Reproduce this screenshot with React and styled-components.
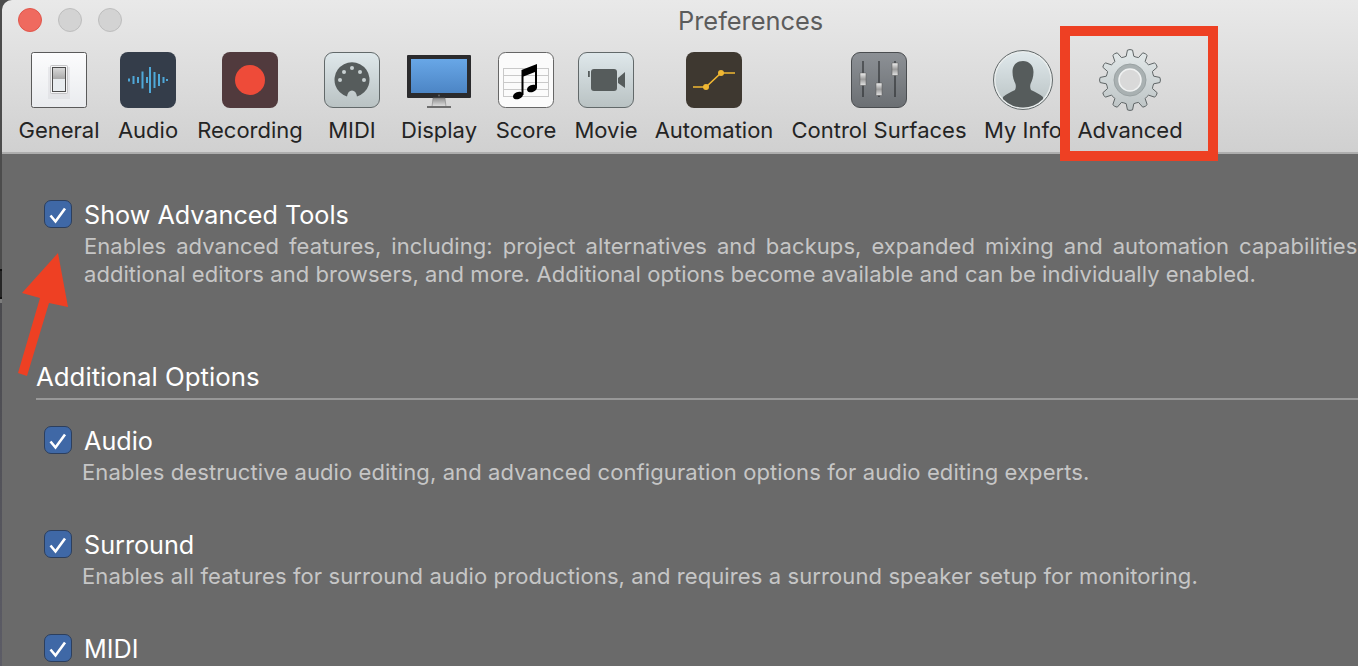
import React from "react";
import styled, { createGlobalStyle } from "styled-components";

const FONT = `Inter, "Noto Sans", "Liberation Sans", sans-serif`;

const GlobalStyle = createGlobalStyle`
    html, body {
        margin: 0;
        padding: 0;
        height: 100%;
        overflow: hidden;
        background: linear-gradient(
            #4c4c4c 0,
            #4c4c4c 269px,
            #111 269px,
            #111 271px,
            #262626 271px,
            #262626 297px,
            #111 297px,
            #111 299px,
            #7c7c7c 299px,
            #7c7c7c 303px,
            #4a4a4e 303px,
            #5c5c66 666px
        );
    }
    #root {
        height: 100%;
    }
`;

const gearPath = () => {
    const points = [];
    const teeth = 12;
    const step = (Math.PI * 2) / teeth;
    for (let i = 0; i < teeth; i++) {
        const a = i * step - Math.PI / 2;
        const at = (r, d) => `${(31 + r * Math.cos(a + d)).toFixed(2)} ${(31 + r * Math.sin(a + d)).toFixed(2)}`;
        points.push(`${i === 0 ? "M" : "L"}${at(24, -0.16)}`);
        points.push(`L${at(30, -0.085)}`);
        points.push(`Q${at(31, 0)} ${at(30, 0.085)}`);
        points.push(`L${at(24, 0.16)}`);
        points.push(`Q${at(23.5, step / 2)} ${at(24, step - 0.16)}`);
    }
    return points.join(" ") + " Z";
};

const LightTile = ({ id, children }) => (
    <svg width="56" height="56" viewBox="0 0 56 56">
        <defs>
            <linearGradient id={id} x1="0" y1="0" x2="0" y2="1">
                <stop offset="0" stopColor="#dfe8eb" />
                <stop offset="1" stopColor="#b9c2c3" />
            </linearGradient>
        </defs>
        <rect x="0.5" y="0.5" width="55" height="55" rx="8.5" fill={`url(#${id})`} stroke="#62696a" />
        {children}
    </svg>
);

const GeneralIcon = () => (
    <svg width="56" height="56" viewBox="0 0 56 56">
        <defs>
            <linearGradient id="genBg" x1="0" y1="0" x2="0" y2="1">
                <stop offset="0" stopColor="#fcfcfd" />
                <stop offset="1" stopColor="#e9ebee" />
            </linearGradient>
            <linearGradient id="genTop" x1="0" y1="0" x2="0" y2="1">
                <stop offset="0" stopColor="#d8d8d8" />
                <stop offset="1" stopColor="#a9a9a9" />
            </linearGradient>
        </defs>
        <rect x="0.5" y="0.5" width="55" height="55" rx="2" fill="url(#genBg)" stroke="#5a5a5a" />
        <rect x="17" y="15" width="22" height="32" fill="#d6d8db" opacity="0.45" />
        <rect x="19.5" y="13.5" width="17" height="28" rx="1" fill="#f4f4f5" stroke="#c4c4c6" />
        <rect x="21.5" y="15.5" width="13" height="24" fill="#e8ecef" stroke="#4c4c4c" />
        <rect x="22" y="16" width="12" height="11" fill="url(#genTop)" />
    </svg>
);

const AudioIcon = () => {
    const bars = [[9, 1.5], [13.5, 4], [18, 3], [22.5, 8.5], [27, 3], [30, 13], [34.5, 8], [39, 6], [43.5, 3], [47, 1]];
    return (
        <svg width="56" height="56" viewBox="0 0 56 56">
            <rect width="56" height="56" rx="8" fill="#343d4a" />
            {bars.map(([x, h]) => (
                <rect key={x} x={x - 1} y={28 - h} width="2" height={h * 2} fill="#4fa8d8" />
            ))}
        </svg>
    );
};

const RecordingIcon = () => (
    <svg width="56" height="56" viewBox="0 0 56 56">
        <rect width="56" height="56" rx="8" fill="#513a3d" />
        <circle cx="28" cy="28" r="15" fill="#ee4b39" />
    </svg>
);

const MidiIcon = () => (
    <LightTile id="midiBg">
        <path d="M23 44.5A17.5 17.5 0 1 1 33 44.5C32.5 40.5 30.5 38.5 28 38.5C25.5 38.5 23.5 40.5 23 44.5Z" fill="#565c5c" />
        {[[16, 28], [20, 20], [28, 16], [36, 20], [40, 28]].map(([cx, cy]) => (
            <circle key={cx} cx={cx} cy={cy} r="2" fill="#c8d0d1" />
        ))}
    </LightTile>
);

const DisplayIcon = () => (
    <svg width="64" height="56" viewBox="0 0 64 56">
        <defs>
            <linearGradient id="dispBg" x1="0" y1="0" x2="0" y2="1">
                <stop offset="0" stopColor="#68a7e7" />
                <stop offset="1" stopColor="#4c85c5" />
            </linearGradient>
            <linearGradient id="dispStand" x1="0" y1="0" x2="0" y2="1">
                <stop offset="0" stopColor="#8e8e8e" />
                <stop offset="1" stopColor="#e6e6e6" />
            </linearGradient>
        </defs>
        <rect y="3" width="64" height="43" rx="1" fill="#2b2b2d" />
        <rect x="4" y="7" width="56" height="34" fill="url(#dispBg)" />
        <circle cx="32" cy="43.5" r="1" fill="#666" />
        <path d="M26 46H38L39 55H25Z" fill="url(#dispStand)" stroke="#777" strokeWidth="0.5" />
        <rect x="20" y="54" width="24" height="2" fill="#6e6e6e" />
    </svg>
);

const ScoreIcon = () => (
    <svg width="56" height="56" viewBox="0 0 56 56">
        <rect x="0.5" y="0.5" width="55" height="55" rx="7" fill="#fbfbfb" stroke="#666" />
        {[16, 23, 30, 37, 44].map((y) => (
            <line key={y} x1="5" y1={y + 0.5} x2="51" y2={y + 0.5} stroke="#c9c9c9" />
        ))}
        <line x1="5.5" y1="16" x2="5.5" y2="44" stroke="#c9c9c9" />
        <line x1="50.5" y1="16" x2="50.5" y2="44" stroke="#c9c9c9" />
        <ellipse cx="20" cy="43.5" rx="5.2" ry="3.6" transform="rotate(-22 20 43.5)" fill="#000" />
        <ellipse cx="34" cy="36.5" rx="5.2" ry="3.6" transform="rotate(-22 34 36.5)" fill="#000" />
        <path d="M23.5 43V18L39 12V36H37V20L25.5 24.5V43Z" fill="#000" />
    </svg>
);

const MovieIcon = () => (
    <LightTile id="movieBg">
        <rect x="13" y="17" width="26" height="22" rx="3" fill="#565c5c" />
        <path d="M40 26L47 20V36L40 31Z" fill="#565c5c" />
        <rect x="10" y="19" width="1.8" height="6" fill="#565c5c" />
    </LightTile>
);

const AutomationIcon = () => (
    <svg width="56" height="56" viewBox="0 0 56 56">
        <rect width="56" height="56" rx="8" fill="#3e3830" />
        <path d="M7 35H20L35 21H49" fill="none" stroke="#f0b732" strokeWidth="1.7" />
        <circle cx="20" cy="35" r="3" fill="#f0b732" />
        <circle cx="35" cy="21" r="3" fill="#f0b732" />
    </svg>
);

const ControlIcon = () => {
    const sliders = [[12, 21], [28, 31], [44, 11]];
    return (
        <svg width="56" height="56" viewBox="0 0 56 56">
            <defs>
                <linearGradient id="ctlBg" x1="0" y1="0" x2="0" y2="1">
                    <stop offset="0" stopColor="#8d9196" />
                    <stop offset="1" stopColor="#6b6f73" />
                </linearGradient>
                <linearGradient id="ctlKnob" x1="0" y1="0" x2="0" y2="1">
                    <stop offset="0" stopColor="#f0f0f0" />
                    <stop offset="0.5" stopColor="#9c9c9c" />
                    <stop offset="1" stopColor="#e4e4e4" />
                </linearGradient>
            </defs>
            <rect x="0.5" y="0.5" width="55" height="55" rx="8.5" fill="url(#ctlBg)" stroke="#4a4d50" />
            {sliders.map(([x, y]) => (
                <g key={x}>
                    <line x1={x} y1="9" x2={x} y2="45" stroke="#1f2022" strokeWidth="1" />
                    <rect x={x - 3} y={y} width="6" height="12.5" rx="0.5" fill="url(#ctlKnob)" stroke="#555" strokeWidth="0.5" />
                </g>
            ))}
        </svg>
    );
};

const InfoIcon = () => (
    <svg width="60" height="60" viewBox="0 0 60 60">
        <defs>
            <linearGradient id="infoBg" x1="0" y1="0" x2="0" y2="1">
                <stop offset="0" stopColor="#dfe8eb" />
                <stop offset="1" stopColor="#b9c2c3" />
            </linearGradient>
            <clipPath id="infoClip">
                <circle cx="30" cy="30" r="27.500" />
            </clipPath>
        </defs>
        <circle cx="30" cy="30" r="29.5" fill="#e8ecec" stroke="#62696a" />
        <circle cx="30" cy="30" r="27.500" fill="url(#infoBg)" />
        <path
            clipPath="url(#infoClip)"
            d="M30 11C36 11 40.5 15 40.5 22C40.5 27 39 31 37.500 34C37 36 37 38 38 40C42 42 47 44 50 47L52 60H8L10 47C13 44 18 42 22 40C23 38 23 36 22.500 34C21 31 19.500 27 19.500 22C19.500 15 24 11 30 11Z"
            fill="#565c5c"
        />
    </svg>
);

const GearIcon = () => (
    <svg width="62" height="62" viewBox="0 0 62 62">
        <defs>
            <linearGradient id="gearBg" x1="0" y1="0" x2="0" y2="1">
                <stop offset="0" stopColor="#e4eaeb" />
                <stop offset="1" stopColor="#bcc3c4" />
            </linearGradient>
        </defs>
        <path d={gearPath()} fill="url(#gearBg)" stroke="#5f6566" strokeWidth="1" />
        <circle cx="31" cy="31" r="16" fill="#a9b1b2" stroke="#9aa2a3" />
        <circle cx="31" cy="31" r="11" fill="#d9d9d9" stroke="#f0f2f2" strokeWidth="1.5" />
    </svg>
);

const tools = [
    { label: "General", width: 80, icon: <GeneralIcon /> },
    { label: "Audio", width: 58, icon: <AudioIcon /> },
    { label: "Recording", width: 106, icon: <RecordingIcon /> },
    { label: "MIDI", width: 58, icon: <MidiIcon /> },
    { label: "Display", width: 76, icon: <DisplayIcon /> },
    { label: "Score", width: 58, icon: <ScoreIcon /> },
    { label: "Movie", width: 62, icon: <MovieIcon /> },
    { label: "Automation", width: 114, icon: <AutomationIcon /> },
    { label: "Control Surfaces", width: 176, icon: <ControlIcon /> },
    { label: "My Info", width: 72, icon: <InfoIcon /> },
    { label: "Advanced", width: 102, icon: <GearIcon /> },
];

const CheckBox = () => (
    <Box>
        <svg width="26" height="26" viewBox="0 0 26 26">
            <path d="M5.500 14.500L10.500 20.500L20 7.500" fill="none" stroke="#fff" strokeWidth="2.600" />
        </svg>
    </Box>
);

const App = () => (
    <Window>
        <GlobalStyle />
        <Header>
            <TitleRow>
                <Lights>
                    <Light $close />
                    <Light />
                    <Light />
                </Lights>
                <Title>Preferences</Title>
            </TitleRow>
            <Toolbar>
                {tools.map((tool) => (
                    <Tool key={tool.label} $width={tool.width}>
                        <ToolIcon>{tool.icon}</ToolIcon>
                        <ToolLabel>{tool.label}</ToolLabel>
                    </Tool>
                ))}
            </Toolbar>
        </Header>
        <Content>
            <MainOption>
                <OptionHead>
                    <CheckBox />
                    <OptionLabel>Show Advanced Tools</OptionLabel>
                </OptionHead>
                <MainDesc $spread>
                    Enables advanced features, including: project alternatives and backups, expanded mixing and automation capabilities,
                </MainDesc>
                <MainDesc>
                    additional editors and browsers, and more. Additional options become available and can be individually enabled.
                </MainDesc>
            </MainOption>
            <SectionTitle>Additional Options</SectionTitle>
            <Rule />
            <Options>
                <Option>
                    <OptionHead>
                        <CheckBox />
                        <OptionLabel>Audio</OptionLabel>
                    </OptionHead>
                    <OptionDesc>Enables destructive audio editing, and advanced configuration options for audio editing experts.</OptionDesc>
                </Option>
                <Option>
                    <OptionHead>
                        <CheckBox />
                        <OptionLabel>Surround</OptionLabel>
                    </OptionHead>
                    <OptionDesc>Enables all features for surround audio productions, and requires a surround speaker setup for monitoring.</OptionDesc>
                </Option>
                <Option>
                    <OptionHead>
                        <CheckBox />
                        <OptionLabel>MIDI</OptionLabel>
                    </OptionHead>
                </Option>
            </Options>
        </Content>
        <RedBox />
        <Arrow width="80" height="130" viewBox="0 0 80 130">
            <path d="M58 3L68 57L49 53L27 126L18 123L40 48L22 43Z" fill="#ee4023" />
        </Arrow>
    </Window>
);

const Window = styled.div`
    position: relative;
    height: 666px;
    margin-left: 2px;
    overflow: hidden;
    border-top-left-radius: 10px;
    background: #6a6a6a;
    font-family: ${FONT};
`;

const Header = styled.header`
    height: 154px;
    box-sizing: border-box;
    background: linear-gradient(#e9e9e9, #d0d0d0);
    border-bottom: 2px solid #aeaeae;
`;

const TitleRow = styled.div`
    display: flex;
    align-items: center;
    height: 40px;
    padding: 0 0 0 16px;
    margin-bottom: 10px;
`;

const Lights = styled.div`
    display: flex;
    gap: 16px;
`;

const Light = styled.span`
    width: 24px;
    height: 24px;
    box-sizing: border-box;
    border-radius: 50%;
    background: ${(p) => (p.$close ? "#ef6a5f" : "#d3d3d3")};
    border: 1px solid ${(p) => (p.$close ? "#e0564b" : "#bdbdbd")};
`;

const Title = styled.h1`
    margin: 0 0 0 556px;
    font-size: 25.4px;
    font-weight: 400;
    color: #5c5c5c;
    white-space: nowrap;
`;

const Toolbar = styled.nav`
    display: flex;
    gap: 20px;
    padding-left: 17px;
`;

const Tool = styled.div`
    display: flex;
    flex-direction: column;
    align-items: center;
    flex: none;
    width: ${(p) => p.$width}px;
`;

const ToolIcon = styled.div`
    display: flex;
    align-items: center;
    justify-content: center;
    height: 62px;
    margin-top: -1px;
    svg {
        display: block;
        flex: none;
    }
`;

const ToolLabel = styled.span`
    margin-top: 5px;
    font-size: 22px;
    line-height: 28px;
    color: #242424;
    white-space: nowrap;
`;

const Content = styled.main`
    padding: 46px 0 0 34px;
    color: #fff;
`;

const MainOption = styled.section`
    padding-left: 8px;
`;

const OptionHead = styled.div`
    display: flex;
    align-items: center;
    gap: 12px;
    height: 28px;
`;

const Box = styled.span`
    display: flex;
    align-items: center;
    justify-content: center;
    flex: none;
    width: 28px;
    height: 28px;
    box-sizing: border-box;
    border-radius: 7px;
    background: #3f68a6;
    border: 1px solid #2c3f5e;
`;

const OptionLabel = styled.span`
    padding-top: 2px;
    font-size: 25.2px;
    line-height: 28px;
    white-space: nowrap;
`;

const MainDesc = styled.p`
    margin: 0 0 0 40px;
    font-size: 22px;
    line-height: 28px;
    letter-spacing: 0.06px;
    color: #c6c6c6;
    white-space: nowrap;
    word-spacing: ${(p) => (p.$spread ? "3.7px" : "0")};
    &:first-of-type {
        margin-top: 4px;
    }
`;

const SectionTitle = styled.h2`
    margin: 73px 0 0 0;
    font-size: 25.8px;
    font-weight: 400;
    line-height: 32px;
    white-space: nowrap;
`;

const Rule = styled.div`
    height: 2px;
    margin-top: 5px;
    background: #989898;
`;

const Options = styled.div`
    display: flex;
    flex-direction: column;
    margin-top: 26px;
    padding-left: 8px;
`;

const Option = styled.section`
    height: 104px;
`;

const OptionDesc = styled.p`
    margin: 4px 0 0 38px;
    font-size: 22px;
    line-height: 28px;
    letter-spacing: 0.1px;
    color: #c6c6c6;
    white-space: nowrap;
`;

const RedBox = styled.div`
    position: absolute;
    left: 1058px;
    top: 26px;
    width: 158px;
    height: 135px;
    box-sizing: border-box;
    border: 10px solid #ee4023;
`;

const Arrow = styled.svg`
    position: absolute;
    left: -2px;
    top: 250px;
`;

export default App;
